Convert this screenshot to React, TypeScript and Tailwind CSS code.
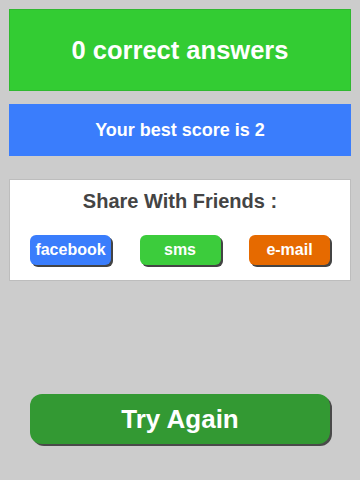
const font = { fontFamily: '"Liberation Sans", Arial, sans-serif' }

function ShareButton({ label, color }: { label: string; color: string }) {
  return (
    <button
      className={`h-[30px] w-[81px] rounded-[6px] text-[16px] font-bold text-white shadow-[2px_2px_0_#444] ${color}`}
    >
      {label}
    </button>
  )
}

export default function App() {
  return (
    <div className="flex h-[480px] w-[360px] flex-col bg-[#cccccc]" style={font}>
      <div className="mx-[9px] mt-[9px] flex h-[82px] items-center justify-center border border-[#2fb82f] bg-[#33cc33]">
        <span className="text-[25.5px] font-bold text-white">0 correct answers</span>
      </div>

      <div className="mx-[9px] mt-[13px] flex h-[52px] items-center justify-center bg-[#3a7dfc]">
        <span className="text-[18px] font-bold text-white">Your best score is 2</span>
      </div>

      <div className="mx-[9px] mt-[23px] flex h-[102px] flex-col items-center border border-[#bdbdbd] bg-white">
        <h2 className="mt-[6px] text-[20px] leading-[30px] font-bold text-[#444]">Share With Friends :</h2>
        <div className="mt-[19px] flex w-full justify-between px-[20px]">
          <ShareButton label="facebook" color="bg-[#3a7dfc]" />
          <ShareButton label="sms" color="bg-[#3ccc3c]" />
          <ShareButton label="e-mail" color="bg-[#e66a00]" />
        </div>
      </div>

      <button className="mx-[30px] mt-[113px] h-[50px] rounded-[12px] bg-[#339933] text-[26px] font-bold text-white shadow-[2px_2px_0_#4a4a4a]">
        Try Again
      </button>
    </div>
  )
}
